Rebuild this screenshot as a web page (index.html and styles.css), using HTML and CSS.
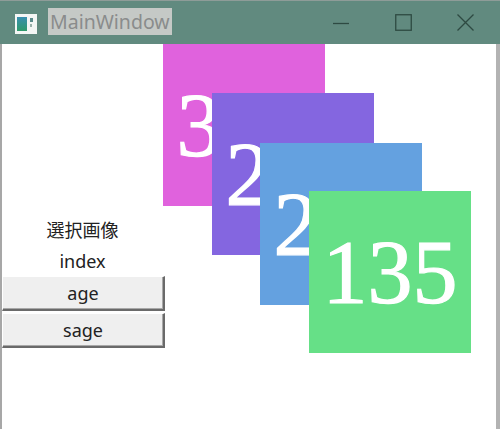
FILE: index.html
```html
<!DOCTYPE html>
<html>
<head>
<meta charset="utf-8">
<link rel="stylesheet" href="styles.css">
</head>
<body>
<div class="window">
  <div class="titlebar">
    <div class="title-left">
      <svg class="app-icon" width="22" height="20" viewBox="0 0 22 20">
        <rect x="0" y="0" width="22" height="20" fill="#f4f6f5"/>
        <defs>
          <linearGradient id="g1" x1="0" y1="0" x2="0" y2="1">
            <stop offset="0" stop-color="#3a8fb0"/>
            <stop offset="1" stop-color="#2e9a6a"/>
          </linearGradient>
        </defs>
        <rect x="2" y="3" width="10" height="14" fill="url(#g1)"/>
        <rect x="15" y="4" width="3" height="4" fill="#5a8a8a"/>
        <rect x="15" y="10" width="2" height="3" fill="#9ab0aa"/>
      </svg>
      <span class="title">MainWindow</span>
    </div>
    <div class="controls">
      <div class="ctl">
        <svg width="16" height="16" viewBox="0 0 16 16"><line x1="0" y1="8.5" x2="16" y2="8.5" stroke="#2e4a42" stroke-width="1.3"/></svg>
      </div>
      <div class="ctl">
        <svg width="17" height="17" viewBox="0 0 17 17"><rect x="0.75" y="0.75" width="15.5" height="15.5" fill="none" stroke="#2e4a42" stroke-width="1.3"/></svg>
      </div>
      <div class="ctl">
        <svg width="17" height="17" viewBox="0 0 17 17"><path d="M0.5 0.5 L16.5 16.5 M16.5 0.5 L0.5 16.5" stroke="#2e4a42" stroke-width="1.3"/></svg>
      </div>
    </div>
  </div>
  <div class="client">
    <div class="side">
      <div class="label cjk">選択画像</div>
      <div class="label idx">index</div>
      <button class="btn">age</button>
      <button class="btn">sage</button>
    </div>
    <div class="canvas">
      <div class="tile pink">300</div>
      <div class="tile purple">270</div>
      <div class="tile blue">213</div>
      <div class="tile green">135</div>
    </div>
  </div>
</div>
</body>
</html>
```
FILE: styles.css
```css
html, body {
  margin: 0;
  padding: 0;
  background: #ffffff;
}
.window {
  width: 500px;
  height: 429px;
  display: flex;
  flex-direction: column;
  overflow: hidden;
}
.titlebar {
  height: 43px;
  border-top: 1px solid #8e9c98;
  background: #618a7f;
  display: flex;
  justify-content: space-between;
  align-items: stretch;
}
.title-left {
  display: flex;
  align-items: center;
  padding-left: 15px;
  gap: 11px;
}
.app-icon {
  display: block;
  margin-top: 2px;
}
.title {
  font-family: "Noto Sans", sans-serif;
  font-size: 19.5px;
  line-height: 27px;
  height: 27px;
  padding: 0 2px 0 2px;
  background: #c5c9c6;
  color: #8a8c8c;
  margin-top: -2px;
}
.controls {
  display: flex;
  margin-right: 4px;
}
.ctl {
  width: 62px;
  display: flex;
  align-items: center;
  justify-content: center;
}
.ctl svg {
  display: block;
}
.client {
  flex: 1;
  display: flex;
  border-left: 2px solid #a7a7a7;
  border-right: 4px solid #b3b3b3;
  background: #ffffff;
}
.side {
  width: 161px;
  padding-top: 168px;
  display: flex;
  flex-direction: column;
  align-items: stretch;
  position: relative;
  z-index: 1;
}
.label {
  text-align: center;
  color: #222;
  font-family: "Noto Sans", "Noto Sans CJK JP", sans-serif;
  font-size: 18px;
}
.cjk {
  font-family: "Noto Sans CJK JP", sans-serif;
  height: 34px;
  line-height: 34px;
}
.idx {
  height: 30px;
  line-height: 30px;
}
.btn {
  width: 163px;
  height: 35px;
  margin: 0 0 2px 0;
  padding: 0;
  background: #efefef;
  border-style: solid;
  border-width: 1px 2px 2px 1px;
  border-color: #ffffff #6a6a6a #6a6a6a #ffffff;
  box-shadow: inset -1px -1px 0 #a8a8a8;
  font-family: "Noto Sans", sans-serif;
  font-size: 18px;
  color: #222;
  text-align: center;
}
.canvas {
  flex: 1;
  position: relative;
}
.tile {
  position: absolute;
  width: 162px;
  height: 162px;
  display: flex;
  align-items: center;
  justify-content: center;
  font-family: "Liberation Serif", serif;
  font-size: 90px;
  color: #ffffff;
  -webkit-text-stroke: 1.2px #ffffff;
}
.pink { left: 0; top: 0; background: #e062dd; }
.purple { left: 49px; top: 49px; background: #8466e0; }
.blue { left: 97px; top: 99px; background: #64a1e0; }
.green { left: 146px; top: 147px; background: #66e087; }
```
